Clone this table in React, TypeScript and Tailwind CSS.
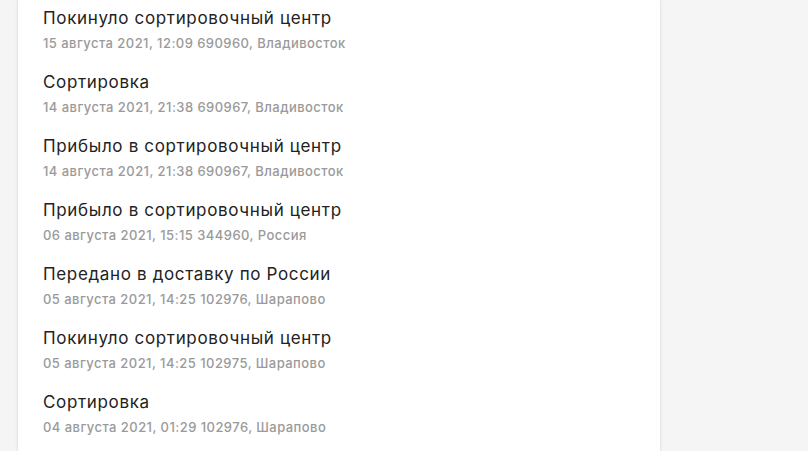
const events = [
  { title: 'Покинуло сортировочный центр', info: '15 августа 2021, 12:09 690960, Владивосток' },
  { title: 'Сортировка', info: '14 августа 2021, 21:38 690967, Владивосток' },
  { title: 'Прибыло в сортировочный центр', info: '14 августа 2021, 21:38 690967, Владивосток' },
  { title: 'Прибыло в сортировочный центр', info: '06 августа 2021, 15:15 344960, Россия' },
  { title: 'Передано в доставку по России', info: '05 августа 2021, 14:25 102976, Шарапово' },
  { title: 'Покинуло сортировочный центр', info: '05 августа 2021, 14:25 102975, Шарапово' },
  { title: 'Сортировка', info: '04 августа 2021, 01:29 102976, Шарапово' },
];

export default function App() {
  return (
    <div
      className="w-[808px] h-[451px] overflow-hidden bg-[#f5f5f5] pl-[17px]"
      style={{ fontFamily: 'Inter, "Noto Sans", sans-serif' }}
    >
      {/* Tracking history card */}
      <div className="w-[644px] h-full bg-white border-x border-[#e6e6e6] shadow-[0_0_3px_rgba(0,0,0,0.06)] pl-[25px] pt-[6px]">
        <ul className="flex flex-col gap-[17px]">
          {events.map((ev, i) => (
            <li key={i} className="flex flex-col">
              <span className="text-[17px] leading-6 text-[#222] tracking-[0.65px]">{ev.title}</span>
              <span className="mt-[3px] text-[13px] leading-5 font-medium text-[#9a9a9a] tracking-[0.45px]">{ev.info}</span>
            </li>
          ))}
        </ul>
      </div>
    </div>
  );
}
